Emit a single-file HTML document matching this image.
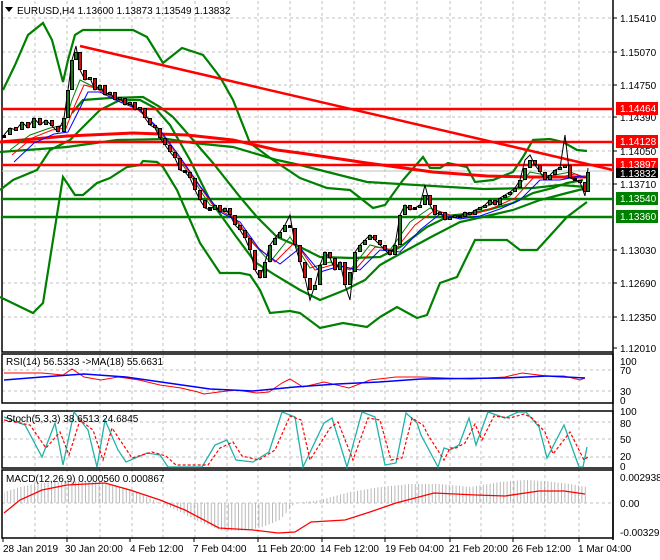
<!DOCTYPE html>
<html><head><meta charset="utf-8"><style>
html,body{margin:0;padding:0;background:#fff;}
svg{display:block;font-family:"Liberation Sans",Tahoma,sans-serif;}
</style></head><body>
<svg width="660" height="560" viewBox="0 0 660 560" xmlns="http://www.w3.org/2000/svg">
<defs>
<pattern id="hist" width="3.4" height="10" patternUnits="userSpaceOnUse"><rect x="0" y="0" width="1" height="10" fill="#b8b8b8"/></pattern>
</defs>
<rect width="660" height="560" fill="#fff"/>
<g stroke="#c0c0c0" stroke-width="1" stroke-dasharray="3,3" fill="none">
<path d="M35 1V538M67 1V538M100 1V538M132 1V538M163 1V538M195 1V538M227 1V538M258 1V538M290 1V538M322 1V538M354 1V538M385 1V538M417 1V538M450 1V538M481 1V538M513 1V538M545 1V538M579 1V538"/>
<path d="M2 18H613M2 52H613M2 85H613M2 117H613M2 151H613M2 184H613M2 217H613M2 250H613M2 283H613M2 317H613"/>
<path d="M2 370H613M2 391H613"/>
<path d="M2 422H613M2 439H613M2 457H613"/>
<path d="M2 503H613"/>
</g>
<g stroke="#000" stroke-width="1.5" fill="none">
<path d="M2 1V352H613"/>
<rect x="2" y="354" width="611" height="49"/>
<rect x="2" y="411" width="611" height="57"/>
<rect x="2" y="470" width="611" height="68"/>
<path d="M613 0V540"/>
</g>
<path d="M2 171H613" stroke="#c0c0c0" stroke-width="1"/>
<g fill="none" stroke="#008000" stroke-width="2.2">
<polyline points="3,90 15,65 28,35 43,23 52,40 63,82 68,60 75,35 83,30 110,30 133,30 147,37 163,63 182,48 203,55 220,77 233,100 250,143 273,160 300,178 327,188 350,190 373,208 385,205 403,180 423,157 430,168 440,168 448,163 467,167 475,182 493,180 513,172 523,157 533,140 550,139 563,142 577,150 587,151"/>
<polyline points="0,297 33,313 43,303 53,240 63,177 75,195 83,195 97,183 110,178 127,167 140,165 143,161 157,162 163,167 177,190 200,243 220,273 240,273 250,275 260,290 270,313 290,311 300,313 320,328 343,323 367,327 380,317 397,307 417,318 427,315 440,283 457,277 475,240 507,240 520,250 537,250 567,217 587,202"/>
<polyline points="72,113 83,100 110,98 143,97 160,107 173,117 187,133 213,163 240,197 257,217 277,237 300,247 320,257 353,258 380,257 400,247 427,227 447,217 473,213 487,210 513,203 533,193 553,188 567,183 583,180"/>
<polyline points="0,190 13,180 37,170 50,150 70,140 83,127 100,110 120,100 140,100 155,108 170,125 190,160 210,200 235,235 255,262 275,275 300,290 320,300 345,290 365,280 380,265 407,250 433,236 460,222 487,216 513,210 540,200 567,193 587,188"/>
<polyline points="0,152 67,147 117,140 167,139 193,143 233,147 277,160 300,165 367,182 433,186 483,189 533,188 560,185 587,187"/>
</g>
<polyline fill="none" stroke="#ff0000" stroke-width="3" points="0,142 67,136 133,133 187,135 233,140 277,150 300,153 367,163 433,172 487,176 533,177 587,177"/>
<g stroke-width="2.5">
<path d="M2 109H613M2 142H613M2 165H613" stroke="#ff0000"/>
<path d="M2 199H613M2 217H613" stroke="#008000"/>
<path d="M80 46L613 170" stroke="#ff0000"/>
</g>
<g fill="none" stroke-width="1">
<polyline stroke="#008000" points="10,150 30,135 50,128 64,125 72,100 80,80 90,85 110,95 130,103 150,120 170,148 190,175 210,205 230,213 250,240 270,262 290,237 310,268 330,262 350,270 370,245 390,250 410,222 430,208 450,215 470,213 490,205 510,196 530,172 550,176 570,172 587,178"/>
<polyline stroke="#ff0000" points="12,155 32,138 52,130 66,128 75,105 84,85 95,88 115,98 135,107 155,125 175,152 195,180 215,208 235,218 255,245 275,262 295,242 315,270 335,264 355,270 375,247 395,250 415,225 435,210 455,217 475,214 495,207 515,198 535,176 555,178 575,174 587,178"/>
<polyline stroke="#0000ff" points="14,162 34,143 54,134 68,132 78,112 88,92 100,92 120,102 140,110 160,130 180,157 200,186 220,212 240,222 260,250 280,264 300,248 320,272 340,266 360,270 380,250 400,252 420,230 440,214 460,219 480,216 500,209 520,200 540,180 560,180 580,176 587,178"/>
</g>
<polyline fill="none" stroke="#000" stroke-width="1" points="4,135 10,128 16,130 22,122 28,128 34,118 40,125 46,120 52,126 58,132 64,118 68,90 72,60 76,46 80,70 85,80 90,78 95,90 100,85 105,95 110,92 115,100 120,98 125,105 130,102 135,110 140,108 145,118 150,125 155,128 160,138 165,145 170,152 175,158 180,170 185,172 190,178 195,190 200,200 205,208 210,210 215,205 220,212 225,208 230,215 235,225 240,230 245,238 250,250 255,270 260,278 265,262 270,245 275,238 280,232 285,225 290,215 295,245 300,262 305,278 310,300 315,285 320,265 325,252 330,258 335,270 340,262 345,285 350,300 355,252 360,245 365,240 370,235 375,240 380,245 385,250 390,255 395,245 400,215 405,205 410,210 415,208 420,205 425,185 430,205 435,215 440,212 445,220 450,218 455,215 460,217 465,212 470,215 475,210 480,208 485,205 490,200 495,205 500,198 505,195 510,192 515,188 520,180 525,160 530,155 535,165 540,172 545,180 550,175 555,170 560,168 565,135 570,178 575,180 580,182 585,196 588,168"/>
<path fill="none" stroke="#000" stroke-width="4" d="M4 138V135M10 135V128M16 127V131M22 130V122M28 122V128M34 128V118M40 118V125M46 125V120M52 120V126M58 126V132M64 132V118M68 118V90M72 90V60M76 60V52M80 52V70M85 70V80M90 80V77M95 78V90M100 90V85M105 85V95M110 95V92M115 92V100M120 100V97M125 98V105M130 105V102M135 102V110M140 110V107M145 108V118M150 118V125M155 125V128M160 128V138M165 138V145M170 145V152M175 152V158M180 158V170M185 170V173M190 172V178M195 178V190M200 190V200M205 200V208M210 207V211M215 210V205M220 205V212M225 212V208M230 208V215M235 215V225M240 225V230M245 230V238M250 238V250M255 250V270M260 270V278M265 278V262M270 262V245M275 245V238M280 238V232M285 232V225M290 225V228M295 228V245M300 245V262M305 262V278M310 278V290M315 290V285M320 285V265M325 265V252M330 252V258M335 258V270M340 270V262M345 262V285M350 285V272M355 272V252M360 252V245M365 245V240M370 240V235M375 235V240M380 240V245M385 245V250M390 250V255M395 255V245M400 245V215M405 215V205M410 205V210M415 207V210M420 208V205M425 205V195M430 195V205M435 205V215M440 215V212M445 212V220M450 220V217M455 218V215M460 215V218M465 217V212M470 212V215M475 215V210M480 210V207M485 208V205M490 205V200M495 200V205M500 205V198M505 198V195M510 195V192M515 192V188M520 188V180M525 180V168M530 168V160M535 160V165M540 165V172M545 172V180M550 180V175M555 175V170M560 170V167M565 168V165M570 165V178M575 178V181M580 180V183M585 182V192M588 192V172"/>
<path fill="none" stroke="#1d7a1d" stroke-width="2" d="M10 134V129M22 129V123M34 127V119M46 124V121M64 131V119M68 117V91M72 89V61M76 59V53M90 79V78M100 89V86M110 94V93M120 99V98M130 104V103M140 109V108M215 209V206M225 211V209M265 277V263M270 261V246M275 244V239M280 237V233M285 231V226M315 289V286M320 284V266M325 264V253M340 269V263M350 284V273M355 271V253M360 251V246M365 244V241M370 239V236M395 254V246M400 244V216M405 214V206M420 207V206M425 204V196M440 214V213M450 219V218M455 217V216M465 216V213M475 214V211M480 209V208M485 207V206M490 204V201M500 204V199M505 197V196M510 194V193M515 191V189M520 187V181M525 179V169M530 167V161M550 179V176M555 174V171M560 169V168M565 167V166M588 191V173"/>
<path fill="none" stroke="#d01010" stroke-width="2" d="M16 128V130M28 123V127M40 119V124M52 121V125M58 127V131M80 53V69M85 71V79M95 79V89M105 86V94M115 93V99M125 99V104M135 103V109M145 109V117M150 119V124M155 126V127M160 129V137M165 139V144M170 146V151M175 153V157M180 159V169M190 173V177M195 179V189M200 191V199M205 201V207M220 206V211M230 209V214M235 216V224M240 226V229M245 231V237M250 239V249M255 251V269M260 271V277M295 229V244M300 246V261M305 263V277M310 279V289M330 253V257M335 259V269M345 263V284M375 236V239M380 241V244M385 246V249M390 251V254M410 206V209M430 196V204M435 206V214M445 213V219M470 213V214M495 201V204M535 161V164M540 166V171M545 173V179M570 166V177M580 181V182M585 183V191"/>
<polyline fill="none" stroke="#ff0000" stroke-width="1" points="4,373 21,373 42,373 63,375 72,369 84,377 101,380 118,377 139,380 160,385 181,388 198,392 204,394 219,392 236,390 257,393 269,392 282,383 290,379 303,387 324,382 349,388 370,380 396,377 421,377 446,378 471,379 505,377 522,373 547,376 564,376 580,380 585,378"/>
<polyline fill="none" stroke="#0000ff" stroke-width="1.5" points="4,380 42,377 84,374 126,377 168,383 210,389 253,391 295,387 337,384 379,382 421,379 505,378 547,376 585,378"/>
<polyline fill="none" stroke="#20b2aa" stroke-width="1.3" points="4,417 25,425 42,457 55,423 63,465 74,412 88,430 97,467 105,420 118,450 126,462 147,453 160,455 168,467 202,467 215,445 227,440 236,460 253,462 269,452 282,412 295,417 303,467 324,423 332,418 347,467 362,412 375,417 385,465 396,463 406,413 417,423 421,435 438,467 444,448 450,450 459,445 469,418 476,445 488,412 505,418 518,412 526,412 539,427 547,458 564,425 579,467 583,467 587,447"/>
<polyline fill="none" stroke="#ff0000" stroke-width="1.2" stroke-dasharray="3,2" points="4,420 30,425 46,448 60,432 69,455 80,420 93,430 103,460 112,428 124,446 132,458 152,452 166,456 176,465 208,465 220,448 233,442 242,456 259,460 275,450 290,416 301,420 310,460 330,428 338,422 353,460 368,418 380,420 391,460 402,458 412,418 423,425 428,435 444,460 450,448 456,448 465,443 475,424 482,440 494,416 510,418 524,414 532,418 545,432 553,454 570,432 584,460 589,456"/>
<polygon fill="url(#hist)" points="4,503 4,492 20,487 40,483 70,481 100,482 120,487 140,494 160,503 180,512 200,522 220,530 240,531 260,528 280,520 295,503 320,500 350,492 380,487 410,484 440,484 470,487 500,482 525,480 545,481 570,484 587,487 587,503"/>
<polyline fill="none" stroke="#ff0000" stroke-width="1.3" points="4,513 20,500 42,490 67,485 105,483 130,490 160,500 185,510 219,528 253,530 278,533 295,532 311,522 345,520 370,512 396,503 434,493 476,495 505,496 539,491 564,491 585,494"/>
<path d="M613 18h4M613 52h4M613 85h4M613 117h4M613 151h4M613 184h4M613 250h4M613 283h4M613 317h4M613 348h4" stroke="#000"/>
<g font-size="10" fill="#000">
<text x="620" y="22">1.15410</text>
<text x="620" y="56">1.15070</text>
<text x="620" y="89">1.14750</text>
<text x="620" y="121">1.14390</text>
<text x="620" y="155">1.14050</text>
<text x="620" y="188">1.13710</text>
<text x="620" y="254">1.13030</text>
<text x="620" y="287">1.12690</text>
<text x="620" y="321">1.12350</text>
<text x="620" y="352">1.12010</text>
<text x="620" y="365">100</text>
<text x="620" y="374">70</text>
<text x="620" y="395">30</text>
<text x="620" y="404">0</text>
<text x="620" y="415">100</text>
<text x="620" y="427">80</text>
<text x="620" y="443">50</text>
<text x="620" y="460">20</text>
<text x="620" y="470">0</text>
<text x="620" y="481">0.002938</text>
<text x="620" y="507">0.00</text>
<text x="620" y="536">-0.003299</text>
</g>
<rect x="616" y="102" width="42" height="13" fill="#ff0000"/>
<rect x="616" y="135" width="42" height="13" fill="#ff0000"/>
<rect x="616" y="158" width="42" height="13" fill="#ff0000"/>
<rect x="616" y="168" width="42" height="10" fill="#000"/>
<rect x="616" y="192" width="42" height="13" fill="#008000"/>
<rect x="616" y="210" width="42" height="13" fill="#008000"/>
<g font-size="10" fill="#fff">
<text x="620" y="112">1.14464</text>
<text x="620" y="145">1.14128</text>
<text x="620" y="168">1.13897</text>
<text x="620" y="177">1.13832</text>
<text x="620" y="202">1.13540</text>
<text x="620" y="220">1.13360</text>
</g>
<g font-size="10" fill="#000">
<path d="M5 7h8l-4 5z" fill="#000"/>
<text x="17" y="14">EURUSD,H4  1.13600 1.13873 1.13549 1.13832</text>
<text x="6" y="365">RSI(14) 56.5333  -&gt;MA(18) 55.6631</text>
<text x="6" y="422">Stoch(5,3,3) 38.6513 24.6845</text>
<text x="6" y="482">MACD(12,26,9) 0.000560 0.000867</text>
</g>
<g font-size="10" fill="#000">
<text x="3" y="552">28 Jan 2019</text>
<text x="65" y="552">30 Jan 20:00</text>
<text x="130" y="552">4 Feb 12:00</text>
<text x="193" y="552">7 Feb 04:00</text>
<text x="257" y="552">11 Feb 20:00</text>
<text x="320" y="552">14 Feb 12:00</text>
<text x="385" y="552">19 Feb 04:00</text>
<text x="449" y="552">21 Feb 20:00</text>
<text x="512" y="552">26 Feb 12:00</text>
<text x="578" y="552">1 Mar 04:00</text>
</g>
<path d="M3 538v4M67 538v4M130 538v4M194 538v4M258 538v4M322 538v4M385 538v4M450 538v4M513 538v4M579 538v4" stroke="#000"/>
</svg>
</body></html>
